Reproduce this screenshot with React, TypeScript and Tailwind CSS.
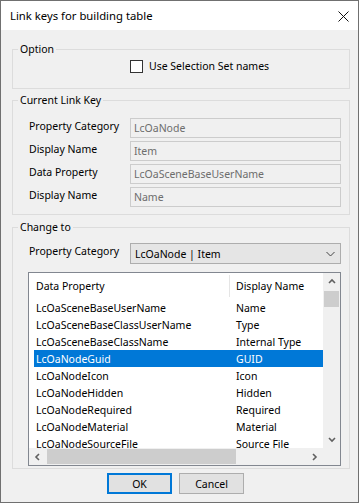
const current = [
  ["Property Category", "LcOaNode"],
  ["Display Name", "Item"],
  ["Data Property", "LcOaSceneBaseUserName"],
  ["Display Name", "Name"],
]

const rows = [
  ["LcOaSceneBaseUserName", "Name"],
  ["LcOaSceneBaseClassUserName", "Type"],
  ["LcOaSceneBaseClassName", "Internal Type"],
  ["LcOaNodeGuid", "GUID"],
  ["LcOaNodeIcon", "Icon"],
  ["LcOaNodeHidden", "Hidden"],
  ["LcOaNodeRequired", "Required"],
  ["LcOaNodeMaterial", "Material"],
  ["LcOaNodeSourceFile", "Source File"],
]

function Chevron({ dir }: { dir: "up" | "down" | "left" | "right" }) {
  const d = {
    up: "M1 5 L4 2 L7 5",
    down: "M1 2 L4 5 L7 2",
    left: "M5 1 L2 4 L5 7",
    right: "M2 1 L5 4 L2 7",
  }[dir]
  return (
    <svg width="8" height="8" viewBox="0 0 8 8">
      <path d={d} fill="none" stroke="#606060" strokeWidth="1.6" />
    </svg>
  )
}

export default function App() {
  return (
    <div className="w-[359px] h-[503px] border border-[#707070] bg-[#f0f0f0] flex flex-col text-[10.5px] text-black font-['Noto_Sans',sans-serif] select-none">
      {/* title bar */}
      <div className="h-[29px] bg-white flex items-center justify-between pl-[9px] pr-[9px] shrink-0">
        <span className="text-[11.3px] leading-[16px] pt-[1px]">Link keys for building table</span>
        <svg width="11" height="11" viewBox="0 0 11 11" className="mt-[1px]">
          <path d="M0.5 0.5 L10.5 10.5 M10.5 0.5 L0.5 10.5" stroke="#111" strokeWidth="1" />
        </svg>
      </div>

      <div className="flex flex-col pl-[11px] pr-[8px] pt-[11px]">
        {/* Option */}
        <fieldset className="border border-[#dcdcdc] pb-[15px] pt-[3px]">
          <legend className="ml-[5px] px-[2px] leading-[16px]">Option</legend>
          <div className="h-[13px] flex items-center pl-[117px]">
            <div className="w-[13px] h-[13px] border border-[#333] bg-white" />
            <span className="ml-[6px] leading-[13px]">Use Selection Set names</span>
          </div>
        </fieldset>

        {/* Current Link Key */}
        <fieldset className="mt-[3px] border border-[#dcdcdc] pt-[10px] pb-[7px] pl-[16px] pr-[8px]">
          <legend className="-ml-[11px] px-[2px] leading-[16px]">Current Link Key</legend>
          <div className="flex flex-col gap-[3px]">
            {current.map(([label, value], i) => (
              <div key={i} className="flex items-center h-[20px]">
                <span className="w-[101px] leading-[16px] -mt-[5px]">{label}</span>
                <div className="flex-1 h-[20px] border border-[#cccccc] bg-[#f0f0f0] text-[#6d6d6d] pl-[3px] flex items-center leading-[16px]">
                  {value}
                </div>
              </div>
            ))}
          </div>
        </fieldset>

        {/* Change to */}
        <fieldset className="mt-[4px] border border-[#dcdcdc] pt-[8px] pb-[2px] pl-[16px] pr-[8px]">
          <legend className="-ml-[11px] px-[2px] leading-[16px]">Change to</legend>
          <div className="flex items-center h-[21px]">
            <span className="w-[101px] leading-[16px] -mt-[5px]">Property Category</span>
            <div className="flex-1 h-[21px] border border-[#adadad] bg-[#e5e5e5] pl-[4px] pr-[5px] flex items-center justify-between leading-[16px]">
              <span>LcOaNode | Item</span>
              <svg width="9" height="6" viewBox="0 0 9 6">
                <path d="M0.5 1 L4.5 5 L8.5 1" fill="none" stroke="#444" strokeWidth="1" />
              </svg>
            </div>
          </div>

          {/* list view */}
          <div className="mt-[8px] -ml-[1px] h-[194px] border border-[#828790] bg-white grid grid-cols-[294px_17px] grid-rows-[175px_17px]">
            <div className="overflow-hidden flex flex-col">
              <div className="h-[26px] shrink-0 flex items-center">
                <span className="w-[200px] pl-[7px] leading-[16px]">Data Property</span>
                <div className="w-px h-[22px] bg-[#e5e5e5]" />
                <span className="pl-[6px] leading-[16px]">Display Name</span>
              </div>
              {rows.map(([prop, name]) => {
                const sel = name === "GUID"
                return (
                  <div
                    key={prop}
                    className={
                      sel
                        ? "ml-[5px] h-[17px] shrink-0 flex items-center bg-[#0078d7] text-white"
                        : "ml-[5px] h-[17px] shrink-0 flex items-center"
                    }
                  >
                    <span className="w-[195px] pl-[2px] leading-[16px]">{prop}</span>
                    <span className="pl-[7px] leading-[16px]">{name}</span>
                  </div>
                )
              })}
            </div>

            {/* vertical scrollbar */}
            <div className="bg-[#f0f0f0] flex flex-col">
              <div className="h-[17px] flex items-center justify-center">
                <Chevron dir="up" />
              </div>
              <div className="mt-[1px] mx-[1px] h-[16px] bg-[#cdcdcd]" />
              <div className="flex-1" />
              <div className="h-[17px] flex items-center justify-center">
                <Chevron dir="down" />
              </div>
            </div>

            {/* horizontal scrollbar */}
            <div className="bg-[#f0f0f0] flex items-center">
              <div className="w-[17px] h-[17px] flex items-center justify-center">
                <Chevron dir="left" />
              </div>
              <div className="ml-[1px] w-[189px] h-[15px] bg-[#cdcdcd]" />
              <div className="flex-1" />
              <div className="w-[17px] h-[17px] flex items-center justify-center">
                <Chevron dir="right" />
              </div>
            </div>
            <div className="bg-[#f0f0f0]" />
          </div>
        </fieldset>
      </div>

      {/* buttons */}
      <div className="flex gap-[7px] pl-[106px] mt-[4px]">
        <button className="w-[65px] h-[21px] border-2 border-[#0078d7] bg-[#e1e1e1] flex items-center justify-center leading-[16px]">
          OK
        </button>
        <button className="w-[65px] h-[21px] border border-[#adadad] bg-[#e1e1e1] flex items-center justify-center leading-[16px]">
          Cancel
        </button>
      </div>
    </div>
  )
}
